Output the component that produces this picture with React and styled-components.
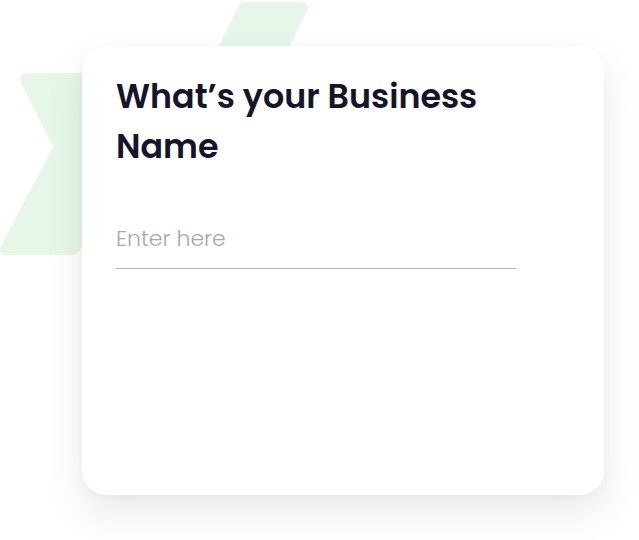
import React from "react";
import styled, { createGlobalStyle } from "styled-components";

const GlobalStyle = createGlobalStyle`
  html, body {
    margin: 0;
    padding: 0;
    background: #ffffff;
  }

  * {
    box-sizing: border-box;
  }
`;

const Stage = styled.div`
  position: relative;
  width: 639px;
  height: 540px;
  padding: 46px 35px 45px 82px;
  overflow: hidden;
  font-family: "Poppins", "Inter", "Noto Sans", sans-serif;
`;

const Backdrop = styled.svg`
  position: absolute;
  left: 0;
  top: 0;
  width: 639px;
  height: 540px;
  pointer-events: none;
`;

const Card = styled.div`
  position: relative;
  z-index: 1;
  width: 522px;
  height: 449px;
  padding: 26px 34px;
  background: #ffffff;
  border-radius: 24px;
  box-shadow: 0 18px 40px rgba(0, 0, 0, 0.09), 0 2px 10px rgba(0, 0, 0, 0.03);
  display: flex;
  flex-direction: column;
`;

const Title = styled.h1`
  margin: 0;
  font-size: 33.3px;
  line-height: 50px;
  font-weight: 600;
  color: #14142b;
`;

const Field = styled.label`
  display: block;
  margin-top: 50px;
  width: 400px;
`;

const Input = styled.input`
  display: block;
  width: 100%;
  height: 47px;
  border: none;
  border-bottom: 1.5px solid #b4b4b4;
  padding: 0 0 13px;
  font-family: inherit;
  font-size: 22px;
  line-height: 33px;
  font-weight: 300;
  color: #14142b;
  background: transparent;
  outline: none;

  &::placeholder {
    color: #a8a8a8;
  }
`;

function Decor() {
  return (
    <Backdrop viewBox="0 0 639 540">
      <g fill="#e6f6e8" stroke="#e6f6e8" strokeWidth="12" strokeLinejoin="round">
        <polygon points="26,79 170,79 170,150 72,249 6,249 60,147" />
        <polygon points="244,8 302,8 272,70 214,70" />
      </g>
    </Backdrop>
  );
}

export default function App() {
  return (
    <>
      <GlobalStyle />
      <Stage>
        <Decor />
        <Card>
          <Title>
            What’s your Business
            <br />
            Name
          </Title>
          <Field>
            <Input type="text" placeholder="Enter here" />
          </Field>
        </Card>
      </Stage>
    </>
  );
}
